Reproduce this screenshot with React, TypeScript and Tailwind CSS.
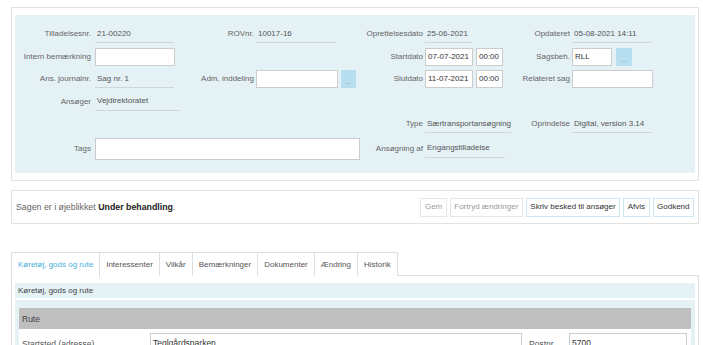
import React from "react";

const Label = ({ children, pr = "pr-[2px]" }: { children: React.ReactNode; pr?: string }) => (
  <div className={`flex items-center justify-end whitespace-nowrap text-[#666] ${pr}`}>{children}</div>
);

const RO = ({ children, w }: { children: React.ReactNode; w: string }) => (
  <div className="flex items-center">
    <div className={`h-[18px] ${w} border-b border-[#cfd6d9] flex items-center pl-[2px] whitespace-nowrap text-[#555]`}>{children}</div>
  </div>
);

const Input = ({ w, value = "", h = "h-[18px]" }: { w: string; value?: string; h?: string }) => (
  <div className={`${w} ${h} bg-white border border-[#cccccc] flex items-center pl-[2px] whitespace-nowrap text-[#333] shrink-0`}>{value}</div>
);

const Dots = ({ w = "w-[15px]" }: { w?: string }) => (
  <div className={`${w} h-[18px] bg-[#b8dff0] flex items-end justify-center pb-[3px] text-[#7a9aa8] text-[7px] leading-none shrink-0`}>...</div>
);

const Btn = ({ children, disabled }: { children: React.ReactNode; disabled?: boolean }) => (
  <div
    className={`h-[19px] px-[3.5px] flex items-center border whitespace-nowrap bg-white ${
      disabled ? "border-[#e6e6e6] text-[#9a9a9a]" : "border-[#cfe6f2] text-[#333]"
    }`}
  >
    {children}
  </div>
);

export default function App() {
  const tabs = ["Køretøj, gods og rute", "Interessenter", "Vilkår", "Bemærkninger", "Dokumenter", "Ændring", "Historik"];
  return (
    <div className="w-[703px] h-[345px] overflow-hidden bg-white font-['Liberation_Sans',Arial,sans-serif] text-[8px] leading-[10px]">
      <div className="pt-[7px] ml-[11px] mr-[4px]">
        {/* top panel */}
        <div className="border border-[#e2e2e2] pt-[7px] pb-[7px] px-[3px]">
          <div className="h-[158px] bg-[#e4f1f5] pt-[10px]">
            <div className="grid grid-cols-[80px_85px_76px_104px_65px_81px_66px_1fr] grid-rows-[18px_18px_18px_18px_18px_22px] gap-y-[4.5px]">
              {/* row 1 */}
              <Label pr="pr-[4px]">Tilladelsesnr.</Label>
              <RO w="w-[79px]">21-00220</RO>
              <Label>ROVnr.</Label>
              <RO w="w-[80px]">10017-16</RO>
              <Label>Oprettelsesdato</Label>
              <RO w="w-[47px]">25-06-2021</RO>
              <Label>Opdateret</Label>
              <RO w="w-[79px]">05-08-2021 14:11</RO>
              {/* row 2 */}
              <Label pr="pr-[4px]">Intern bemærkning</Label>
              <div className="flex items-center"><Input w="w-[80px]" /></div>
              <div />
              <div />
              <Label>Startdato</Label>
              <div className="flex items-center gap-[3px]">
                <Input w="w-[48px]" value="07-07-2021" />
                <Input w="w-[27px]" value="00:00" />
              </div>
              <Label>Sagsbeh.</Label>
              <div className="flex items-center gap-[4px]">
                <Input w="w-[40px]" value="RLL" />
                <Dots w="w-[16px]" />
              </div>
              {/* row 3 */}
              <Label pr="pr-[4px]">Ans. journalnr.</Label>
              <RO w="w-[79px]">Sag nr. 1</RO>
              <Label>Adm. inddeling</Label>
              <div className="flex items-center gap-[3px]">
                <Input w="w-[82px]" />
                <Dots />
              </div>
              <Label>Slutdato</Label>
              <div className="flex items-center gap-[3px]">
                <Input w="w-[48px]" value="11-07-2021" />
                <Input w="w-[27px]" value="00:00" />
              </div>
              <Label>Relateret sag</Label>
              <div className="flex items-center"><Input w="w-[81px]" /></div>
              {/* row 4 */}
              <Label pr="pr-[4px]">Ansøger</Label>
              <RO w="w-[101px]">Vejdirektoratet</RO>
              <div />
              <div />
              <div />
              <div />
              <div />
              <div />
              {/* row 5 */}
              <div />
              <div />
              <div />
              <div />
              <Label>Type</Label>
              <RO w="w-[89px]">Særtransportansøgning</RO>
              <Label>Oprindelse</Label>
              <RO w="w-[79px]">Digital, version 3.14</RO>
              {/* row 6 */}
              <Label pr="pr-[4px]">Tags</Label>
              <div className="col-span-3 flex items-center">
                <Input w="w-[265px]" h="h-[22px]" />
              </div>
              <Label>Ansøgning af</Label>
              <RO w="w-[80px]">Engangstilladelse</RO>
              <div />
              <div />
            </div>
          </div>
        </div>

        {/* status bar */}
        <div className="mt-[9px] h-[34px] border border-[#e2e2e2] flex items-center justify-between pl-[4px] pr-[4px]">
          <div className="text-[#666] text-[8.8px]">
            Sagen er i øjeblikket <span className="font-bold text-[#222]">Under behandling</span>.
          </div>
          <div className="flex items-center gap-[3px]">
            <Btn disabled>Gem</Btn>
            <Btn disabled>Fortryd ændringer</Btn>
            <Btn>Skriv besked til ansøger</Btn>
            <Btn>Afvis</Btn>
            <Btn>Godkend</Btn>
          </div>
        </div>

        {/* tabs */}
        <div className="mt-[28px] flex h-[24px]">
          {tabs.map((t, i) => (
            <div
              key={t}
              className={`h-[24px] flex items-center px-[6px] border-t border-r border-[#dedede] whitespace-nowrap ${
                i === 0 ? "border-l bg-white relative z-10 h-[25px] text-[#4aaed9] self-start" : "bg-white text-[#555]"
              }`}
            >
              {t}
            </div>
          ))}
        </div>

        {/* panel */}
        <div className="-mt-[1px] border border-[#dedede] pt-[7px] px-[3px] h-[80px]">
          <div className="h-[15px] bg-[#e4f1f5] flex items-center pl-[3px] text-[#444]">Køretøj, gods og rute</div>
          <div className="mt-[2px] bg-[#e4f1f5] pt-[8px] px-[4px] h-[60px]">
            <div className="h-[21px] bg-[#bfbfbf] flex items-center pl-[3px] text-[#444] text-[8.5px]">Rute</div>
            <div className="bg-white flex pt-[4px] h-[40px] text-[8.5px]">
              <div className="w-[131px] pl-[3px] pt-[6px] text-[#555]">Startsted (adresse)</div>
              <Input w="w-[372px]" h="h-[20px]" value="Teglgårdsparken" />
              <div className="w-[47px] pl-[7px] pt-[6px] text-[#555]">Postnr.</div>
              <Input w="w-[118px]" h="h-[20px]" value="5700" />
            </div>
          </div>
        </div>
      </div>
    </div>
  );
}
